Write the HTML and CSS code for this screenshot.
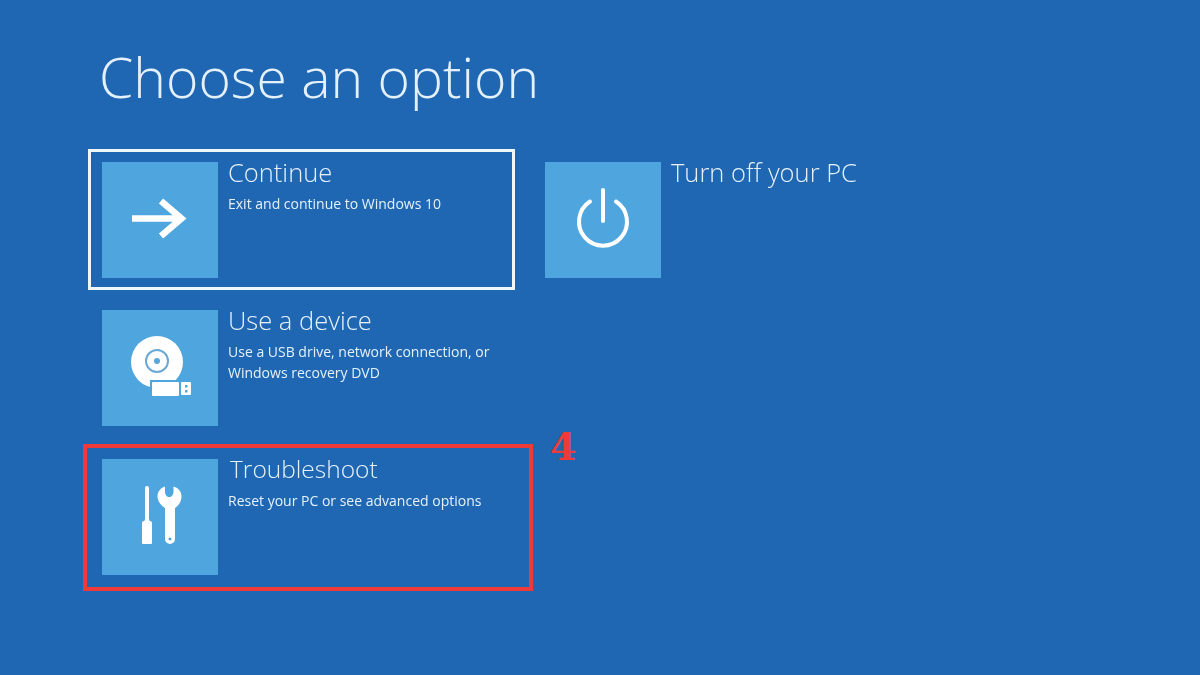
FILE: index.html
```html
<!DOCTYPE html>
<html lang="en">
<head>
  <meta charset="UTF-8">
  <meta name="viewport" content="width=device-width, initial-scale=1.0">
  <title>Choose an option</title>
  <link rel="stylesheet" href="styles.css">
</head>
<body>
  <h1 class="page-title">Choose an option</h1>

  <div class="options">
    <div class="column column-left">
      <div class="option selected">
        <div class="tile">
          <svg class="icon" viewBox="0 0 80 80">
            <path d="M12 38.500H60M41 21L61.500 38.500L41 56" fill="none" stroke="#fff" stroke-width="6.500"/>
          </svg>
        </div>
        <div class="option-text">
          <div class="option-title">Continue</div>
          <div class="option-desc">Exit and continue to Windows 10</div>
        </div>
      </div>

      <div class="option">
        <div class="tile">
          <svg class="icon" viewBox="0 0 80 80">
            <circle cx="37" cy="34" r="26" fill="#fff"/>
            <circle cx="37" cy="33" r="11" fill="none" stroke="#6aa9d6" stroke-width="2"/>
            <circle cx="37" cy="33" r="3" fill="#5aa5da"/>
            <rect x="30" y="52" width="43" height="18" fill="#4fa5dd"/>
            <rect x="32" y="54" width="27" height="14" rx="1" fill="#fff"/>
            <rect x="61" y="54" width="10" height="13" rx="1" fill="#fff"/>
            <rect x="65" y="57" width="2.500" height="2.500" fill="#4fa5dd"/>
            <rect x="65" y="62" width="2.500" height="2.500" fill="#4fa5dd"/>
          </svg>
        </div>
        <div class="option-text">
          <div class="option-title">Use a device</div>
          <div class="option-desc">Use a USB drive, network connection, or<br>Windows recovery DVD</div>
        </div>
      </div>

      <div class="option troubleshoot">
        <div class="tile">
          <svg class="icon" viewBox="0 0 80 80">
            <path d="M25 11a2 2 0 0 1 4 0V42L30 45H24L25 42Z" fill="#fff"/>
            <path d="M22 46a2 2 0 0 1 2-2H30a2 2 0 0 1 2 2V66a1 1 0 0 1-1 1H23a1 1 0 0 1-1-1Z" fill="#fff"/>
            <path fill-rule="evenodd" d="M45 9.500C40 11 37.500 15 37.500 19.500C37.500 24 41 28.500 45 31V62A5 5 0 0 0 55 62V31C59 28.500 61.500 24 61.500 19.500C61.500 15 59 11 53.500 9.500V14C53.500 18 51.500 20 49.250 20S45 18 45 14ZM50 60.500a1.500 1.500 0 1 1-.01 0Z" fill="#fff"/>
          </svg>
        </div>
        <div class="option-text">
          <div class="option-title">Troubleshoot</div>
          <div class="option-desc">Reset your PC or see advanced options</div>
        </div>
        <div class="mark-box"></div>
        <div class="mark-number">4</div>
      </div>
    </div>

    <div class="column">
      <div class="option">
        <div class="tile">
          <svg class="icon" viewBox="0 0 80 80">
            <path d="M27 21.500A24 24 0 1 0 53 21.500" fill="none" stroke="#fff" stroke-width="4" stroke-linecap="round"/>
            <path d="M40 10V41" fill="none" stroke="#fff" stroke-width="4" stroke-linecap="round"/>
          </svg>
        </div>
        <div class="option-text">
          <div class="option-title">Turn off your PC</div>
        </div>
      </div>
    </div>
  </div>
</body>
</html>
```

FILE: styles.css
```css
body {
  margin: 0;
  height: 675px;
  overflow: hidden;
  background-color: #2067b3;
  color: #e4f1fa;
  font-family: "Open Sans", "Noto Sans", "Liberation Sans", sans-serif;
  font-weight: 300;
}
.page-title {
  margin: 0;
  padding: 42px 0 0 99px;
  height: 149px;
  box-sizing: border-box;
  font-size: 55.300px;
  font-weight: 300;
  line-height: 70px;
  filter: blur(0.4px);
}
.options {
  display: flex;
  gap: 16px;
  padding-left: 88px;
}
.column {
  display: flex;
  flex-direction: column;
  gap: 7px;
}
.column-left {
  width: 427px;
}
.option {
  position: relative;
  display: flex;
  gap: 10px;
  height: 141px;
  box-sizing: border-box;
  padding: 10px 11px;
  border: 3px solid transparent;
}
.option.selected {
  border-color: #eef7fc;
}
.troubleshoot {
  margin-top: 1px;
}
.tile {
  display: flex;
  align-items: center;
  justify-content: center;
  flex: none;
  width: 116px;
  height: 116px;
  background-color: #4fa5dd;
}
.icon {
  width: 80px;
  height: 80px;
  filter: blur(0.4px);
}
.option-text {
  margin-top: -2px;
  filter: blur(0.4px);
}
.option-title {
  font-size: 25.500px;
  line-height: 24px;
  white-space: nowrap;
}
.troubleshoot .option-title {
  margin-left: 2px;
  font-size: 24.500px;
}
.option-desc {
  margin-top: 9px;
  font-size: 14px;
  font-weight: 400;
  line-height: 21px;
  white-space: nowrap;
}
.mark-box {
  position: absolute;
  top: -5px;
  left: -8px;
  right: -21px;
  bottom: -7px;
  border: 4px solid #f03a3a;
}
.mark-number {
  position: absolute;
  top: -26px;
  left: 459px;
  color: #f03a3a;
  font-family: "DejaVu Serif", serif;
  font-size: 38px;
  font-weight: 700;
  line-height: 48px;
}
```
